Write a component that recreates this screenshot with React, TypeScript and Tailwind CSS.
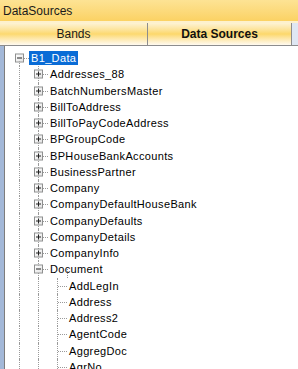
import React from "react";

interface TreeRow {
  label: string;
  depth: number;
  box?: "plus" | "minus";
  selected?: boolean;
  root?: boolean;
}

const rows: TreeRow[] = [
  { label: "B1_Data", depth: 0, box: "minus", selected: true, root: true },
  { label: "Addresses_88", depth: 1, box: "plus" },
  { label: "BatchNumbersMaster", depth: 1, box: "plus" },
  { label: "BillToAddress", depth: 1, box: "plus" },
  { label: "BillToPayCodeAddress", depth: 1, box: "plus" },
  { label: "BPGroupCode", depth: 1, box: "plus" },
  { label: "BPHouseBankAccounts", depth: 1, box: "plus" },
  { label: "BusinessPartner", depth: 1, box: "plus" },
  { label: "Company", depth: 1, box: "plus" },
  { label: "CompanyDefaultHouseBank", depth: 1, box: "plus" },
  { label: "CompanyDefaults", depth: 1, box: "plus" },
  { label: "CompanyDetails", depth: 1, box: "plus" },
  { label: "CompanyInfo", depth: 1, box: "plus" },
  { label: "Document", depth: 1, box: "minus" },
  { label: "AddLegIn", depth: 2 },
  { label: "Address", depth: 2 },
  { label: "Address2", depth: 2 },
  { label: "AgentCode", depth: 2 },
  { label: "AggregDoc", depth: 2 },
  { label: "AgrNo", depth: 2 },
];

function ExpandBox({ kind }: { kind: "plus" | "minus" }) {
  return (
    <div className="absolute left-[5px] top-1/2 -translate-y-1/2 w-[9px] h-[9px] border border-[#8e8f8f] bg-gradient-to-br from-white to-[#e3e3e3] flex items-center justify-center">
      <div className="relative w-[5px] h-[5px]">
        <div className="absolute left-0 top-[2px] w-[5px] h-[1px] bg-[#222]" />
        {kind === "plus" && <div className="absolute left-[2px] top-0 w-[1px] h-[5px] bg-[#222]" />}
      </div>
    </div>
  );
}

function GuideCell({ node, row }: { node: boolean; row: TreeRow }) {
  return (
    <div className="relative w-[19px] h-full shrink-0">
      {/* vertical guide line */}
      {!row.root && (
        <div className="absolute left-[9px] top-0 bottom-0 border-l border-dotted border-[#9a9a9a]" />
      )}
      {node && row.root && (
        <div className="absolute left-[9px] top-1/2 bottom-0 border-l border-dotted border-[#9a9a9a]" />
      )}
      {node && (
        <div className="absolute left-[10px] right-0 top-1/2 border-t border-dotted border-[#9a9a9a]" />
      )}
      {node && row.box && <ExpandBox kind={row.box} />}
    </div>
  );
}

function Row({ row }: { row: TreeRow }) {
  const cols = [];
  for (let c = 0; c <= row.depth; c++) {
    cols.push(<GuideCell key={c} node={c === row.depth} row={row} />);
  }
  // expanded Document: line down to its children
  const childLine = row.label === "Document";
  return (
    <div className="relative flex items-center h-[16.25px]">
      {cols}
      {childLine && (
        <div className="absolute left-[57px] top-1/2 bottom-0 border-l border-dotted border-[#9a9a9a]" />
      )}
      <span
        className={`px-[2px] leading-[14px] whitespace-nowrap tracking-[0.35px] ${
          row.selected ? "bg-[#0a6cd6] text-white" : "text-black"
        }`}
      >
        {row.label}
      </span>
    </div>
  );
}

export default function App() {
  return (
    <div
      className="w-[298px] h-[369px] overflow-hidden bg-white flex flex-col"
      style={{ fontFamily: '"Liberation Sans", Arial, sans-serif' }}
    >
      {/* Title bar */}
      <div className="h-[21px] shrink-0 bg-gradient-to-b from-[#fde394] to-[#fbd263] flex items-center pl-[3px] text-[12px] text-[#1a1a1a]">
        DataSources
      </div>
      <div className="h-[2px] shrink-0 bg-[#fdf1cd]" />

      {/* Tabs */}
      <div className="h-[23px] shrink-0 flex border-b border-[#8d8d8d]">
        <div className="w-[148px] flex items-center justify-center text-[12px] text-[#1a1a1a] bg-gradient-to-b from-[#fdf3d4] via-[#fcd96f] to-[#fffaf0] border-r border-[#8d8d8d]">
          Bands
        </div>
        <div className="w-[144px] flex items-center justify-center text-[12px] font-bold text-[#111] bg-gradient-to-b from-[#fdf3d4] via-[#fcd86a] to-[#fffaf0] border-r border-[#8d8d8d]">
          Data Sources
        </div>
        <div className="flex-1 bg-[#dfe7f3]" />
      </div>

      {/* Tree */}
      <div className="flex-1 flex min-h-0">
        <div className="w-[4px] shrink-0 bg-[#a3b8d8]" />
        <div className="w-[1px] shrink-0 bg-[#7d7d7d]" />
        <div className="flex-1 pl-[5px] pt-[4px] text-[11px] overflow-hidden">
          {rows.map((r, i) => (
            <Row key={i} row={r} />
          ))}
        </div>
      </div>
    </div>
  );
}
